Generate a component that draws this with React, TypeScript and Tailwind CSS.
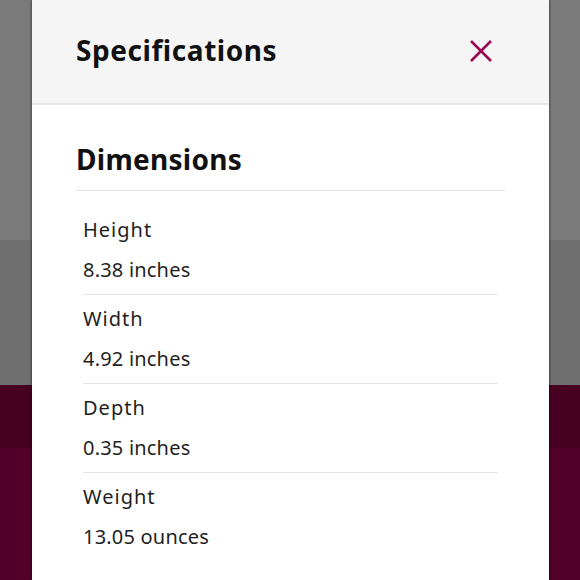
import React from "react";

const rows = [
  { label: "Height", value: "8.38 inches" },
  { label: "Width", value: "4.92 inches" },
  { label: "Depth", value: "0.35 inches" },
  { label: "Weight", value: "13.05 ounces" },
];

export default function App() {
  return (
    <div className="relative w-[580px] h-[580px] overflow-hidden" style={{ fontFamily: '"Noto Sans", "Open Sans", sans-serif' }}>
      {/* dimmed background page */}
      <div className="flex flex-col h-full">
        <div className="h-[240px] bg-[#7a7a7a]" />
        <div className="h-[145px] bg-[#6f6f6f]" />
        <div className="h-[63px] bg-[#460020]" />
        <div className="flex-1 bg-[#52002a]" />
      </div>

      {/* modal sheet */}
      <div className="absolute left-[32px] top-0 w-[517px] h-[580px] bg-white shadow-[-1px_0_2px_rgba(0,0,0,0.35),1px_0_2px_rgba(0,0,0,0.35)] flex flex-col">
        <div className="h-[105px] shrink-0 bg-[#f5f5f5] border-b-2 border-[#e6e6e6] flex items-center justify-between pl-[44px] pr-[56px]">
          <h1 className="text-[28px] leading-[34px] tracking-[0.02em] font-bold text-[#111111] pb-[4px]">Specifications</h1>
          <button className="w-[24px] h-[24px] flex items-center justify-center mb-[2px]">
            <svg width="24" height="22" viewBox="0 0 24 22">
              <path d="M2 1 L22 21 M22 1 L2 21" stroke="#9a0a54" strokeWidth="2.6" strokeLinecap="butt" />
            </svg>
          </button>
        </div>

        <div className="px-[44px] pt-[37px]">
          <h2 className="text-[28px] leading-[34px] tracking-[0.01em] font-bold text-[#111111] pb-[14px] border-b border-[#e4e4e4]">Dimensions</h2>
          <div className="px-[7px] pt-[15px]">
            {rows.map((r, i) => (
              <div
                key={r.label}
                className={`pt-[10px] pb-[10px] ${i < rows.length - 1 ? "border-b border-[#e4e4e4]" : ""}`}
              >
                <div className="text-[20px] leading-[28px] tracking-[0.05em] text-[#1f1f1f]">{r.label}</div>
                <div className="mt-[12px] text-[20px] leading-[28px] tracking-[0.01em] text-[#1f1f1f]">{r.value}</div>
              </div>
            ))}
          </div>
        </div>
      </div>
    </div>
  );
}
